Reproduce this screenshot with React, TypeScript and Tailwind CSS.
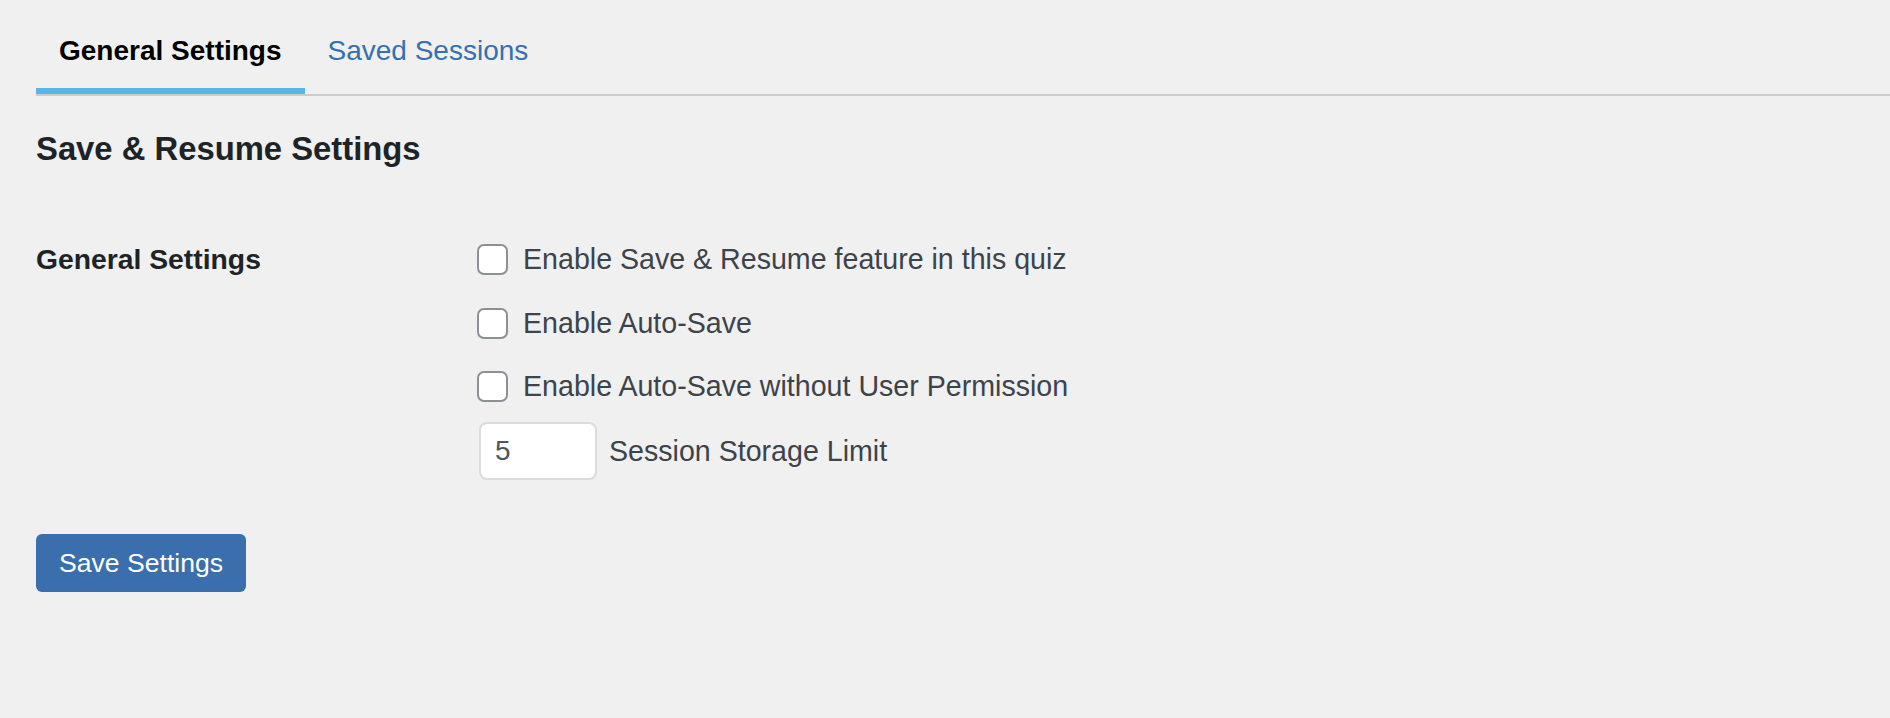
import { useState } from 'react'

const options = [
  { id: 'enable', label: 'Enable Save & Resume feature in this quiz', mt: 'mt-0' },
  { id: 'autosave', label: 'Enable Auto-Save', mt: 'mt-[32px]' },
  { id: 'nopermission', label: 'Enable Auto-Save without User Permission', mt: 'mt-[31px]' },
]

export default function App() {
  const [tab, setTab] = useState('general')
  const [checked, setChecked] = useState<Record<string, boolean>>({})
  const [limit, setLimit] = useState('5')

  return (
    <div className="min-h-screen w-full bg-[#f0f0f0] pl-[36px] font-['Liberation_Sans',Arial,sans-serif]">
      {/* Tabs */}
      <div className="flex border-b-2 border-[#cccccc]">
        <button
          onClick={() => setTab('general')}
          className={`px-[23px] pt-[32px] pb-[18px] leading-[38px] text-[28px] border-b-[6px] ${tab === 'general' ? 'border-[#56b7e6] text-black font-bold' : 'border-transparent text-[#3570b0]'}`}
        >
          General Settings
        </button>
        <button
          onClick={() => setTab('sessions')}
          className={`px-[23px] pt-[32px] pb-[18px] leading-[38px] text-[28px] border-b-[6px] ${tab === 'sessions' ? 'border-[#56b7e6] text-black font-bold' : 'border-transparent text-[#3570b0]'}`}
        >
          Saved Sessions
        </button>
      </div>

      <h2 className="mt-[33px] text-[32.8px] leading-[40px] font-bold text-[#1d2327]">Save &amp; Resume Settings</h2>

      <div className="mt-[74px] flex">
        <div className="w-[441px] text-[28.3px] leading-[32px] font-bold text-[#1d2327]">General Settings</div>
        <div className="flex flex-col">
          {options.map(o => (
            <label key={o.id} className={`flex items-center gap-[15px] cursor-pointer ${o.mt}`}>
              <span
                onClick={() => setChecked(p => ({ ...p, [o.id]: !p[o.id] }))}
                className="w-[31px] h-[31px] flex items-center justify-center rounded-[7px] border-2 border-[#8c8f94] bg-white"
              >
                {checked[o.id] && <span className="text-[#2271b1] text-[22px] leading-none">✓</span>}
              </span>
              <span className="text-[28.6px] leading-[32px] text-[#3c434a]">{o.label}</span>
            </label>
          ))}
          <div className="mt-[20px] flex items-center gap-[12px]">
            <input
              value={limit}
              onChange={e => setLimit(e.target.value)}
              className="w-[118px] h-[58px] ml-[2px] px-[14px] rounded-[8px] border-2 border-[#dcdcde] bg-white text-[28px] text-[#50575e] outline-none"
            />
            <span className="text-[28.6px] leading-[32px] text-[#3c434a]">Session Storage Limit</span>
          </div>
        </div>
      </div>

      <button className="mt-[54px] h-[58px] px-[23px] rounded-[6px] bg-[#3a6ead] text-white text-[26.6px] leading-[58px]">
        Save Settings
      </button>
    </div>
  )
}
